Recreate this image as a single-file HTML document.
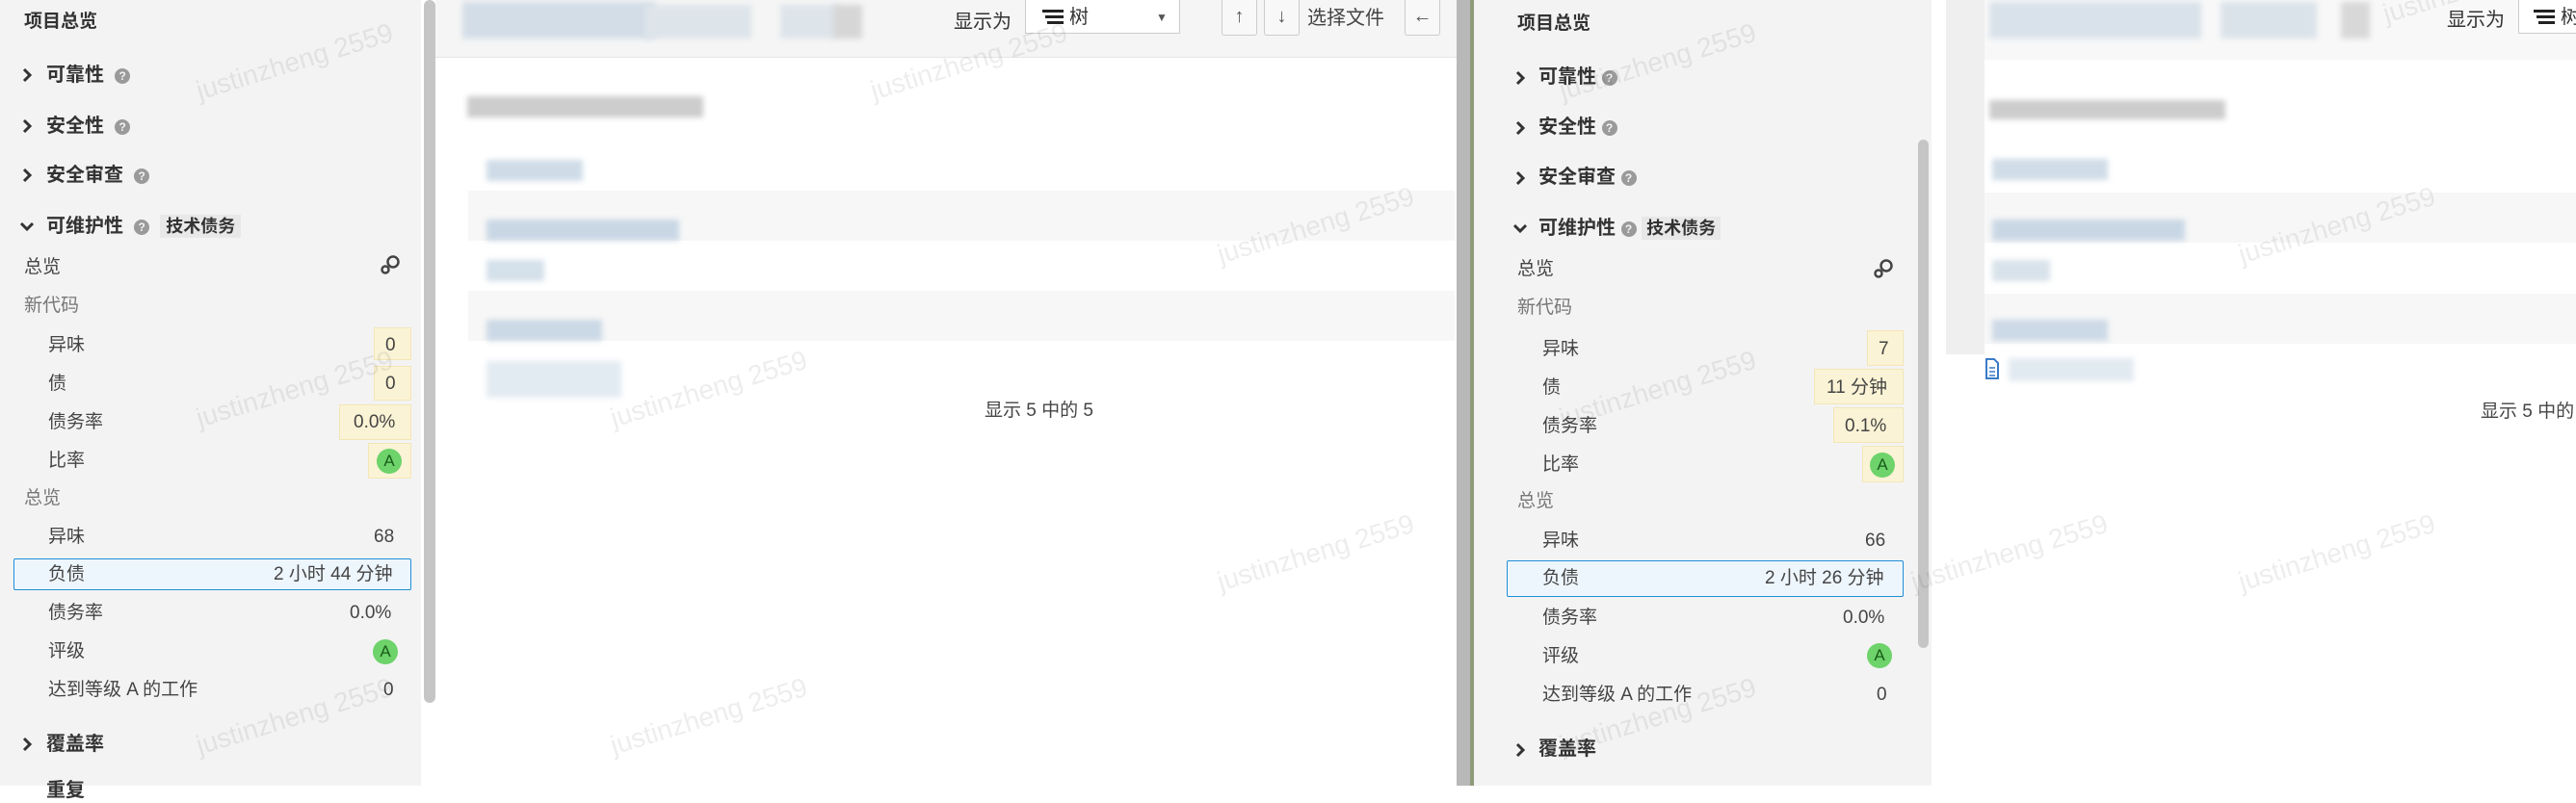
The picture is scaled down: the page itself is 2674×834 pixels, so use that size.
<!DOCTYPE html>
<html><head><meta charset="utf-8">
<style>
*{margin:0;padding:0;box-sizing:border-box}
body{width:2674px;height:816px;overflow:hidden;background:#fff;position:relative;font-family:"Liberation Sans","Noto Sans CJK SC",sans-serif;color:#333}
.a{position:absolute;white-space:nowrap;line-height:26px}
.panel{position:absolute;top:0;height:816px;background:#f3f3f3}
.h{font-size:20px;font-weight:bold;color:#333}
.t{font-size:19px;color:#444}
.g{color:#777}
.q{display:inline-block;width:16px;height:16px;border-radius:50%;background:#9a9a9a;color:#f3f3f3;font-size:12px;font-weight:bold;text-align:center;line-height:16px;vertical-align:middle}
.yb{position:absolute;background:#fbf3d5;border:1px solid #f3e6b6}
.gA{position:absolute;width:26px;height:26px;border-radius:50%;background:#6dd36a;color:#1a5b19;font-size:17px;text-align:center;line-height:26px}
.sel{position:absolute;border:1px solid #1f8fd8;background:#eef6fd;border-radius:2px}
.wm{position:absolute;font-size:28px;color:rgba(0,0,0,0.07);transform:rotate(-17deg);transform-origin:left top;white-space:nowrap}
.blur{position:absolute;filter:blur(3px)}
.btn{position:absolute;top:0;height:37px;background:#f8f8f8;border:1px solid #ccc;border-top:none;border-radius:0 0 3px 3px;text-align:center;font-size:20px;line-height:34px;color:#555}
svg.c{position:absolute}
</style></head><body>

<!-- left panel -->
<div class="panel" style="left:0;width:437px"></div>
<div class="a" style="left:440px;top:0;width:12px;height:730px;background:#c5c5c5;border-radius:6px"></div>
<div class="a h" style="left:25px;top:10px;font-size:19px">项目总览</div>
<svg class="c" style="left:22px;top:70px" width="12" height="16"><path d="M3 2 L9 8 L3 14" stroke="#333" stroke-width="3" fill="none"/></svg>
<div class="a h" style="left:48px;top:65px">可靠性 &nbsp;<span class="q">?</span></div>
<svg class="c" style="left:22px;top:123px" width="12" height="16"><path d="M3 2 L9 8 L3 14" stroke="#333" stroke-width="3" fill="none"/></svg>
<div class="a h" style="left:48px;top:118px">安全性 &nbsp;<span class="q">?</span></div>
<svg class="c" style="left:22px;top:174px" width="12" height="16"><path d="M3 2 L9 8 L3 14" stroke="#333" stroke-width="3" fill="none"/></svg>
<div class="a h" style="left:48px;top:169px">安全审查 &nbsp;<span class="q">?</span></div>
<svg class="c" style="left:20px;top:229px" width="16" height="12"><path d="M2 3 L8 9 L14 3" stroke="#333" stroke-width="3" fill="none"/></svg>
<div class="a h" style="left:48px;top:222px">可维护性 &nbsp;<span class="q">?</span> &nbsp;<span style="background:#e8e8e8;padding:2px 6px;font-size:18px">技术债务</span></div>
<div class="a t" style="left:25px;top:265px">总览</div>
<svg class="c" style="left:394px;top:264px" width="22" height="22"><circle cx="14" cy="8" r="5.5" stroke="#444" stroke-width="2.5" fill="none"/><circle cx="6" cy="16" r="3.5" stroke="#444" stroke-width="2.5" fill="none"/></svg>
<div class="a t g" style="left:25px;top:305px">新代码</div>
<div class="yb" style="left:388px;top:340px;width:39px;height:34px"></div>
<div class="a t" style="left:50px;top:346px">异味</div><div class="a t" style="left:400px;top:346px">0</div>
<div class="yb" style="left:388px;top:380px;width:39px;height:36px"></div>
<div class="a t" style="left:50px;top:386px">债</div><div class="a t" style="left:400px;top:386px">0</div>
<div class="yb" style="left:352px;top:420px;width:75px;height:37px"></div>
<div class="a t" style="left:50px;top:426px">债务率</div><div class="a t" style="left:367px;top:426px">0.0%</div>
<div class="yb" style="left:382px;top:460px;width:45px;height:37px"></div>
<div class="a t" style="left:50px;top:466px">比率</div><div class="gA" style="left:391px;top:466px">A</div>
<div class="a t g" style="left:25px;top:505px">总览</div>
<div class="a t" style="left:50px;top:545px">异味</div><div class="a t" style="left:388px;top:545px">68</div>
<div class="sel" style="left:14px;top:580px;width:413px;height:33px"></div>
<div class="a t" style="left:50px;top:584px">负债</div><div class="a t" style="left:284px;top:584px">2 小时 44 分钟</div>
<div class="a t" style="left:50px;top:624px">债务率</div><div class="a t" style="left:363px;top:624px">0.0%</div>
<div class="a t" style="left:50px;top:664px">评级</div><div class="gA" style="left:387px;top:664px">A</div>
<div class="a t" style="left:50px;top:704px">达到等级 A 的工作</div><div class="a t" style="left:398px;top:704px">0</div>
<svg class="c" style="left:22px;top:765px" width="12" height="16"><path d="M3 2 L9 8 L3 14" stroke="#333" stroke-width="3" fill="none"/></svg>
<div class="a h" style="left:48px;top:760px">覆盖率</div>
<div class="a h" style="left:48px;top:808px">重复</div>

<!-- middle -->
<div class="a" style="left:452px;top:0;width:1060px;height:60px;background:#f5f5f5;border-bottom:1px solid #e6e6e6"></div>
<div class="blur" style="left:480px;top:2px;width:200px;height:38px;background:#d3dde7"></div>
<div class="blur" style="left:670px;top:5px;width:110px;height:35px;background:#dde4ea"></div>
<div class="blur" style="left:810px;top:5px;width:60px;height:35px;background:#dde4ea"></div>
<div class="blur" style="left:865px;top:5px;width:30px;height:35px;background:#d6d6d6"></div>
<div class="blur" style="left:485px;top:100px;width:245px;height:22px;background:#cccccc"></div>
<div class="a" style="left:486px;top:198px;width:1024px;height:52px;background:#f7f7f7"></div>
<div class="a" style="left:486px;top:302px;width:1024px;height:52px;background:#f7f7f7"></div>
<div class="blur" style="left:505px;top:166px;width:100px;height:22px;background:#cfdce8"></div>
<div class="blur" style="left:505px;top:228px;width:200px;height:22px;background:#c9d7e5"></div>
<div class="blur" style="left:505px;top:270px;width:60px;height:22px;background:#d4e0ea"></div>
<div class="blur" style="left:505px;top:332px;width:120px;height:22px;background:#cbd8e5"></div>
<div class="blur" style="left:505px;top:375px;width:140px;height:38px;background:#e3ebf2"></div>
<div class="a" style="left:990px;top:10px;font-size:20px;color:#333">显示为</div>
<div class="a" style="left:1064px;top:0;width:161px;height:35px;background:#fff;border:1px solid #ccc;border-top:none"></div>
<svg class="c" style="left:1082px;top:9px" width="24" height="20"><rect x="0" y="1" width="22" height="3" fill="#222"/><rect x="3" y="7" width="19" height="3" fill="#222"/><rect x="5" y="13" width="17" height="3" fill="#222"/></svg>
<div class="a" style="left:1110px;top:5px;font-size:20px">树</div>
<div class="a" style="left:1200px;top:5px;font-size:12px;color:#555">▼</div>
<div class="btn" style="left:1268px;width:37px">↑</div>
<div class="btn" style="left:1312px;width:37px">↓</div>
<div class="a" style="left:1357px;top:6px;font-size:20px;color:#444">选择文件</div>
<div class="btn" style="left:1458px;width:37px">←</div>
<div class="a" style="left:1022px;top:414px;font-size:19px;color:#444">显示 5 中的 5</div>

<!-- divider -->
<div class="a" style="left:1512px;top:0;width:14px;height:816px;background:#b8b8b8"></div>
<div class="a" style="left:1526px;top:0;width:4px;height:816px;background:#8d9a7a"></div>

<!-- second panel -->
<div class="panel" style="left:1530px;width:475px"></div>
<div class="a" style="left:1991px;top:145px;width:11px;height:528px;background:#c5c5c5;border-radius:6px"></div>
<div class="a h" style="left:1575px;top:12px;font-size:19px">项目总览</div>
<svg class="c" style="left:1572px;top:73px" width="12" height="16"><path d="M3 2 L9 8 L3 14" stroke="#333" stroke-width="3" fill="none"/></svg>
<div class="a h" style="left:1597px;top:67px">可靠性 <span class="q">?</span></div>
<svg class="c" style="left:1572px;top:125px" width="12" height="16"><path d="M3 2 L9 8 L3 14" stroke="#333" stroke-width="3" fill="none"/></svg>
<div class="a h" style="left:1597px;top:119px">安全性 <span class="q">?</span></div>
<svg class="c" style="left:1572px;top:177px" width="12" height="16"><path d="M3 2 L9 8 L3 14" stroke="#333" stroke-width="3" fill="none"/></svg>
<div class="a h" style="left:1597px;top:171px">安全审查 <span class="q">?</span></div>
<svg class="c" style="left:1570px;top:231px" width="16" height="12"><path d="M2 3 L8 9 L14 3" stroke="#333" stroke-width="3" fill="none"/></svg>
<div class="a h" style="left:1597px;top:224px">可维护性 <span class="q">?</span> <span style="background:#e8e8e8;padding:2px 5px;font-size:18px">技术债务</span></div>
<div class="a t" style="left:1575px;top:267px">总览</div>
<svg class="c" style="left:1944px;top:268px" width="22" height="22"><circle cx="14" cy="8" r="5.5" stroke="#444" stroke-width="2.5" fill="none"/><circle cx="6" cy="16" r="3.5" stroke="#444" stroke-width="2.5" fill="none"/></svg>
<div class="a t g" style="left:1575px;top:307px">新代码</div>
<div class="yb" style="left:1938px;top:343px;width:38px;height:37px"></div>
<div class="a t" style="left:1601px;top:350px">异味</div><div class="a t" style="left:1950px;top:350px">7</div>
<div class="yb" style="left:1883px;top:383px;width:93px;height:37px"></div>
<div class="a t" style="left:1601px;top:390px">债</div><div class="a t" style="left:1896px;top:390px">11 分钟</div>
<div class="yb" style="left:1903px;top:423px;width:73px;height:37px"></div>
<div class="a t" style="left:1601px;top:430px">债务率</div><div class="a t" style="left:1915px;top:430px">0.1%</div>
<div class="yb" style="left:1933px;top:463px;width:43px;height:38px"></div>
<div class="a t" style="left:1601px;top:470px">比率</div><div class="gA" style="left:1941px;top:470px">A</div>
<div class="a t g" style="left:1575px;top:508px">总览</div>
<div class="a t" style="left:1601px;top:549px">异味</div><div class="a t" style="left:1936px;top:549px">66</div>
<div class="sel" style="left:1564px;top:582px;width:412px;height:38px"></div>
<div class="a t" style="left:1601px;top:588px">负债</div><div class="a t" style="left:1832px;top:588px">2 小时 26 分钟</div>
<div class="a t" style="left:1601px;top:629px">债务率</div><div class="a t" style="left:1913px;top:629px">0.0%</div>
<div class="a t" style="left:1601px;top:669px">评级</div><div class="gA" style="left:1938px;top:668px">A</div>
<div class="a t" style="left:1601px;top:709px">达到等级 A 的工作</div><div class="a t" style="left:1948px;top:709px">0</div>
<svg class="c" style="left:1572px;top:771px" width="12" height="16"><path d="M3 2 L9 8 L3 14" stroke="#333" stroke-width="3" fill="none"/></svg>
<div class="a h" style="left:1597px;top:765px">覆盖率</div>

<!-- right content -->
<div class="a" style="left:2020px;top:0;width:40px;height:368px;background:#efefef"></div>
<div class="a" style="left:2060px;top:0;width:614px;height:62px;background:#f8f8f8"></div>
<div class="blur" style="left:2065px;top:2px;width:220px;height:38px;background:#d9e2ea"></div>
<div class="blur" style="left:2305px;top:2px;width:100px;height:38px;background:#dbe3ea"></div>
<div class="blur" style="left:2430px;top:2px;width:30px;height:38px;background:#d8d8d8"></div>
<div class="blur" style="left:2065px;top:104px;width:245px;height:20px;background:#cccccc"></div>
<div class="a" style="left:2060px;top:200px;width:614px;height:52px;background:#f7f7f7"></div>
<div class="a" style="left:2060px;top:305px;width:614px;height:52px;background:#f7f7f7"></div>
<div class="blur" style="left:2068px;top:165px;width:120px;height:22px;background:#d0dce7"></div>
<div class="blur" style="left:2068px;top:228px;width:200px;height:22px;background:#c9d7e5"></div>
<div class="blur" style="left:2068px;top:270px;width:60px;height:22px;background:#d8e2ea"></div>
<div class="blur" style="left:2068px;top:332px;width:120px;height:22px;background:#ccd9e6"></div>
<div class="blur" style="left:2085px;top:372px;width:130px;height:24px;background:#e2eaf1"></div>
<svg class="c" style="left:2060px;top:372px" width="16" height="22"><path d="M2 1 H10 L14 5 V21 H2 Z" stroke="#3a7bc8" stroke-width="2" fill="#fff"/><path d="M5 10 H11 M5 14 H11 M5 18 H11" stroke="#3a7bc8" stroke-width="1.5"/></svg>
<div class="a" style="left:2540px;top:8px;font-size:20px;color:#333">显示为</div>
<div class="a" style="left:2614px;top:0;width:70px;height:35px;background:#fff;border:1px solid #ccc;border-top:none"></div>
<svg class="c" style="left:2630px;top:9px" width="24" height="20"><rect x="0" y="1" width="22" height="3" fill="#222"/><rect x="3" y="7" width="19" height="3" fill="#222"/><rect x="5" y="13" width="17" height="3" fill="#222"/></svg>
<div class="a" style="left:2658px;top:5px;font-size:20px">树</div>
<div class="a" style="left:2575px;top:415px;font-size:19px;color:#444">显示 5 中的 5</div>

<!-- watermarks -->
<div class="wm" style="left:200px;top:80px">justinzheng 2559</div>
<div class="wm" style="left:200px;top:420px">justinzheng 2559</div>
<div class="wm" style="left:200px;top:760px">justinzheng 2559</div>
<div class="wm" style="left:-70px;top:215px">2559</div>
<div class="wm" style="left:-70px;top:555px">2559</div>
<div class="wm" style="left:630px;top:760px">justinzheng 2559</div>
<div class="wm" style="left:630px;top:420px">justinzheng 2559</div>
<div class="wm" style="left:900px;top:80px">justinzheng 2559</div>
<div class="wm" style="left:1260px;top:250px">justinzheng 2559</div>
<div class="wm" style="left:1260px;top:590px">justinzheng 2559</div>
<div class="wm" style="left:1615px;top:80px">justinzheng 2559</div>
<div class="wm" style="left:1615px;top:420px">justinzheng 2559</div>
<div class="wm" style="left:1615px;top:760px">justinzheng 2559</div>
<div class="wm" style="left:1980px;top:590px">justinzheng 2559</div>
<div class="wm" style="left:2320px;top:250px">justinzheng 2559</div>
<div class="wm" style="left:2320px;top:590px">justinzheng 2559</div>
<div class="wm" style="left:2470px;top:0px">justinzheng 2559</div>
</body></html>
